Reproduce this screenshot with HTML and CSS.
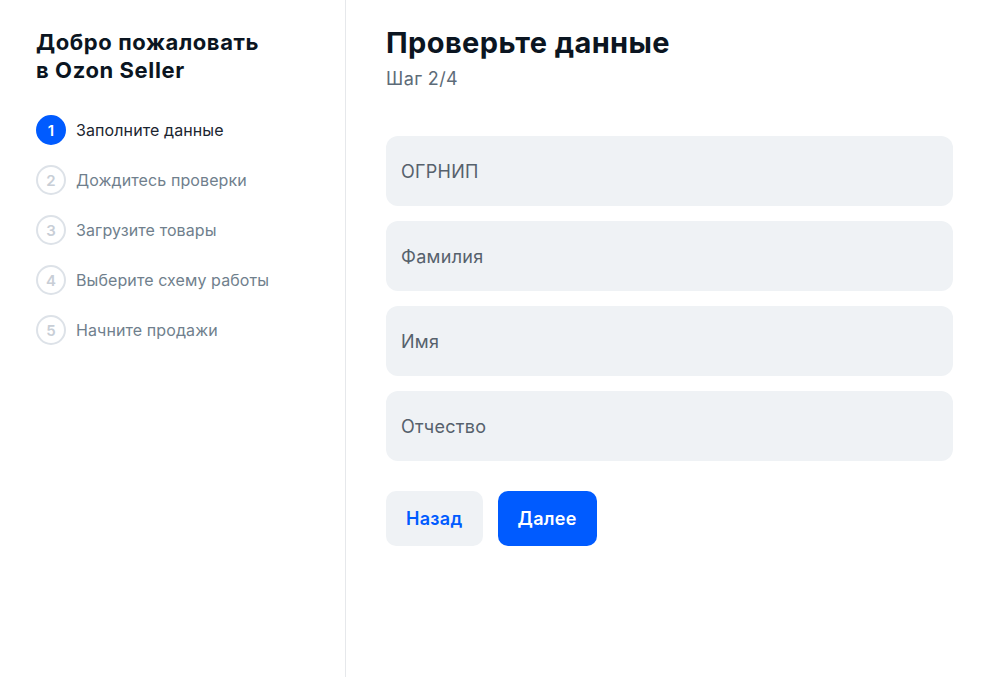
FILE: index.html
```html
<!DOCTYPE html>
<html lang="ru">

<head>
  <meta charset="UTF-8">
  <meta name="viewport" content="width=device-width, initial-scale=1.0">
  <title>Ozon Seller — регистрация</title>
  <link rel="stylesheet" href="styles.css">
</head>

<body>

  <div class="page">

    <!-- Sidebar with steps -->
    <aside class="sidebar">
      <h2 class="welcome">Добро пожаловать<br>в Ozon Seller</h2>
      <ol class="steps">
        <li class="step active"><span class="step-num">1</span>Заполните данные</li>
        <li class="step"><span class="step-num">2</span>Дождитесь проверки</li>
        <li class="step"><span class="step-num">3</span>Загрузите товары</li>
        <li class="step"><span class="step-num">4</span>Выберите схему работы</li>
        <li class="step"><span class="step-num">5</span>Начните продажи</li>
      </ol>
    </aside>

    <!-- Form -->
    <main class="content">
      <h1 class="title">Проверьте данные</h1>
      <div class="subtitle">Шаг 2/4</div>

      <form class="form">
        <input class="field" type="text" placeholder="ОГРНИП">
        <input class="field" type="text" placeholder="Фамилия">
        <input class="field" type="text" placeholder="Имя">
        <input class="field" type="text" placeholder="Отчество">

        <div class="actions">
          <button type="button" class="btn btn-back">Назад</button>
          <button type="button" class="btn btn-next">Далее</button>
        </div>
      </form>
    </main>

  </div>

</body>

</html>
```

FILE: styles.css
```css
/* Base */
* {
  box-sizing: border-box;
}
body {
  margin: 0;
  background: #fff;
  font-family: Inter, "Noto Sans", sans-serif;
  color: #001a34;
}

.page {
  display: flex;
  height: 677px;
}

/* Sidebar */
.sidebar {
  width: 346px;
  flex-shrink: 0;
  border-right: 1px solid #e6e8eb;
  padding: 28px 20px 0 36px;
}
.welcome {
  margin: 0 0 31px;
  font-size: 22px;
  letter-spacing: 0.6px;
  line-height: 28px;
  font-weight: 700;
  color: #0b1521;
}
.steps {
  list-style: none;
  margin: 0;
  padding: 0;
  display: flex;
  flex-direction: column;
  gap: 20px;
}
.step {
  display: flex;
  align-items: center;
  gap: 10px;
  height: 30px;
  font-size: 16px;
  letter-spacing: 0.1px;
  color: #707f8d;
}
.step-num {
  width: 30px;
  height: 30px;
  border-radius: 50%;
  border: 2px solid #dde2e8;
  display: flex;
  align-items: center;
  justify-content: center;
  font-size: 15px;
  font-weight: 600;
  color: #c8ced6;
}
.step.active {
  color: #1b2530;
}
.step.active .step-num {
  background: #005bff;
  border-color: #005bff;
  color: #fff;
}

/* Content */
.content {
  flex: 1;
  padding: 25px 39px 0 40px;
}
.title {
  margin: 0;
  font-size: 29px;
  letter-spacing: 0.4px;
  line-height: 36px;
  font-weight: 700;
  color: #0b1521;
}
.subtitle {
  margin-top: 7px;
  font-size: 18px;
  letter-spacing: 0.4px;
  color: #5d6b78;
}

.form {
  margin-top: 47px;
  display: flex;
  flex-direction: column;
  gap: 15px;
}
.field {
  height: 70px;
  border: none;
  border-radius: 12px;
  background: #eff2f5;
  padding: 0 15px;
  font-family: inherit;
  font-size: 18px;
  letter-spacing: 0.3px;
  color: #001a34;
  outline: none;
}
.field::placeholder {
  color: #56616c;
}

.actions {
  margin-top: 15px;
  display: flex;
  gap: 15px;
}
.btn {
  height: 55px;
  border: none;
  border-radius: 10px;
  padding: 0 20px;
  font-family: inherit;
  font-size: 18px;
  font-weight: 600;
  letter-spacing: 0.3px;
  cursor: pointer;
}
.btn-back {
  background: #eff2f5;
  color: #005bff;
}
.btn-next {
  background: #005bff;
  color: #fff;
}
```
